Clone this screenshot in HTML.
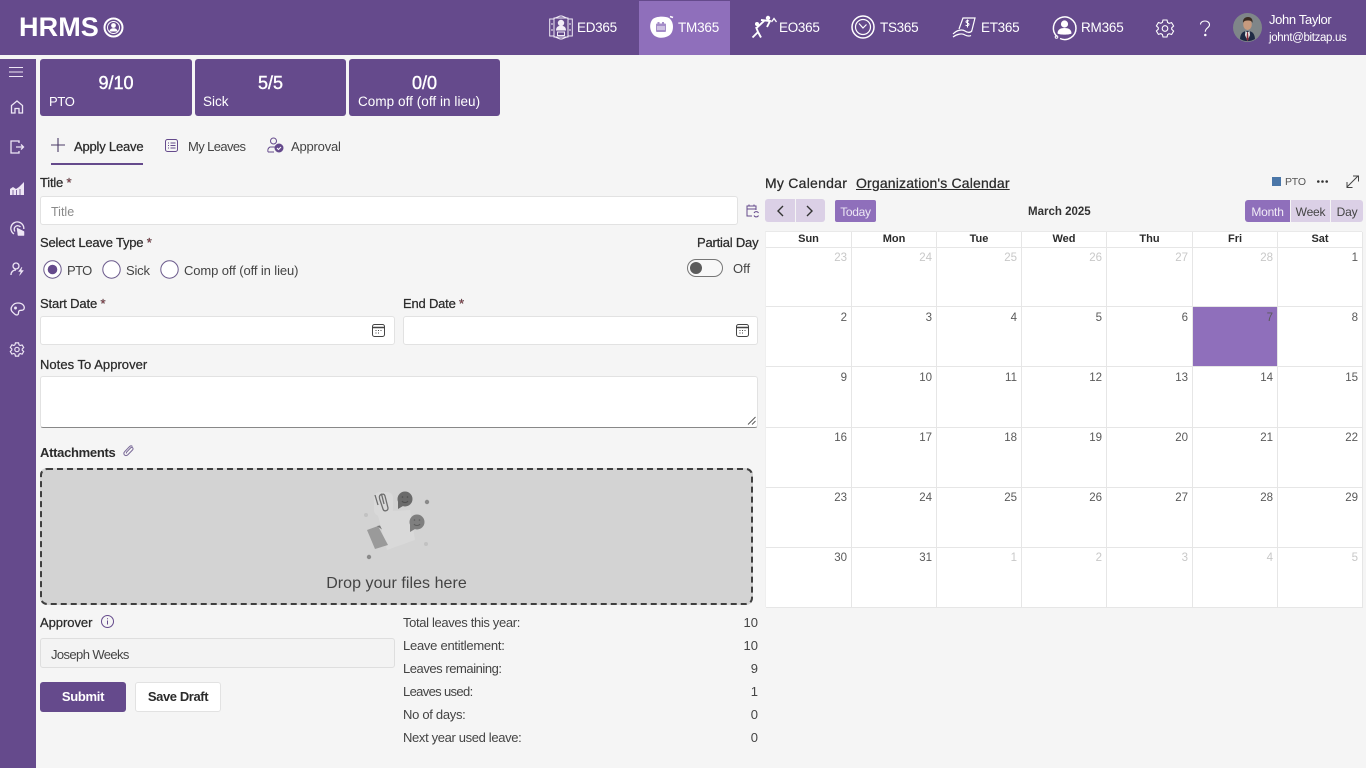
<!DOCTYPE html>
<html lang="en">
<head>
<meta charset="utf-8">
<title>HRMS</title>
<style>
html,body{margin:0;padding:0;width:1366px;height:768px;overflow:hidden;background:#f5f5f5;font-family:"Liberation Sans",sans-serif;color:#333}
*{box-sizing:border-box}
.t{position:absolute;white-space:nowrap;line-height:20px;height:20px;font-size:13px;color:#3a3a3a}
.b{font-weight:400;color:#2b2b2b;-webkit-text-stroke:.25px #2b2b2b}
.w{color:#fff}
.r{color:#a4404f}
.abs{position:absolute}
svg{position:absolute;overflow:visible;fill:none}
.card{position:absolute;top:59px;height:57px;background:#654a8c;border-radius:3px}
.input{position:absolute;background:#fff;border:1px solid #e2e2e2;border-radius:3px}
.cal{position:absolute;left:765px;top:231px;width:597px;height:376px;display:grid;grid-template-columns:86px 85px 85px 85px 86px 85px 85px;grid-template-rows:16px 59px 60px 61px 60px 60px 60px;background:#fff;border-top:1px solid #e9e9e9;border-left:1px solid #efefef}
.cal div{border-right:1px solid #e6e6e6;border-bottom:1px solid #e6e6e6;font-size:11.5px;color:#5a5a5a;text-align:right;padding:3px 4px 0 0;line-height:14px}
.cal .h{text-align:center;font-size:11px;font-weight:700;color:#2b2b2b;padding:0;line-height:15px}
.cal .m{color:#c8c8c8}
.cal .s{background:#8f6fbb}
.cal .p{padding-top:4px}
</style>
</head>
<body>
<!-- top bar -->
<div class="abs" style="left:0;top:0;width:1366px;height:55px;background:#654a8c"></div>
<div class="abs" style="left:639px;top:1px;width:91px;height:54px;background:#8f6fbb"></div>
<div class="t w" style="left:19px;top:12px;height:30px;line-height:30px;font-size:27px;font-weight:700;letter-spacing:.1px">HRMS</div>
<svg style="left:103px;top:17px" width="21" height="21" viewBox="0 0 21 21"><circle cx="10.5" cy="10.5" r="9" stroke="#fff" stroke-width="2"/><circle cx="10.5" cy="10.5" r="6" stroke="#fff" stroke-width="1"/><circle cx="10.5" cy="8.500" r="2.400" fill="#fff"/><path d="M6.300 14.500c.6-2.500 2.200-3.200 4.200-3.200s3.600.7 4.200 3.200z" fill="#fff"/></svg>

<!-- ED365 -->
<svg style="left:549px;top:15px" width="24" height="25" viewBox="0 0 24 25" stroke="#f1ecf6" stroke-width="1"><path d="M5 3.500L11 1h2l6 2.500M5 21.500l6 2.500h2l6-2.500"/><rect x="5" y="3" width="14" height="19"/><rect x=".7" y="4" width="4.300" height="17"/><rect x="19" y="4" width="4.300" height="17"/><circle cx="12" cy="8" r="2.700" fill="#f1ecf6"/><path d="M7.500 15c0-2.800 2-3.800 4.500-3.800s4.500 1 4.500 3.800z" fill="#f1ecf6"/><rect x="8.500" y="17" width="7" height="3.500"/><path d="M3 8v2M3 14v2M21 8v2M21 14v2"/></svg>
<div class="t w" style="left:577px;top:18px;font-size:13.500px;letter-spacing:-.3px">ED365</div>
<!-- TM365 -->
<svg style="left:648px;top:15px" width="27" height="25" viewBox="0 0 27 25"><path d="M4 5C7 1 17 1 21 3c4 3 5 9 3 14-2 5-10 7-15 5C3 20 0 11 4 5z" fill="#fff"/><path d="M22 1.500l3 1" stroke="#fff" stroke-width="1.500"/><rect x="8" y="8.500" width="10" height="8.500" rx="1" fill="#a48cc8"/><rect x="9.500" y="7" width="2" height="3" fill="#a48cc8"/><rect x="14" y="7" width="2" height="3" fill="#a48cc8"/><path d="M10 11v4M12 11v4M14 11v4M16 11v4" stroke="#fff" stroke-width=".9"/></svg>
<div class="t w" style="left:678px;top:18px;font-size:13.500px;letter-spacing:-.2px">TM365</div>
<!-- EO365 -->
<svg style="left:750px;top:15px" width="26" height="25" viewBox="0 0 26 25"><circle cx="7" cy="9" r="2" fill="#fff"/><circle cx="18" cy="3" r="2.200" fill="#fff"/><path d="M6 12l2 5-5.500 5.500M8 17l3 5.500M7 12.500l7-6.500M11 5l9 1-3 6" stroke="#fff" stroke-width="1.900"/><path d="M21.500 7l2.500-3.500L26.500 7" stroke="#fff" stroke-width="1.300"/></svg>
<div class="t w" style="left:779px;top:18px;font-size:13.500px;letter-spacing:-.3px">EO365</div>
<!-- TS365 -->
<svg style="left:851px;top:15px" width="24" height="24" viewBox="0 0 24 24" stroke="#fff"><circle cx="12" cy="12" r="11" stroke-width="1.500"/><circle cx="12" cy="12" r="7.500" stroke-width="1.200"/><path d="M8 8.500l4 4.500 3.500-3.500" stroke-width="1.200"/></svg>
<div class="t w" style="left:880px;top:18px;font-size:13.500px;letter-spacing:-.3px">TS365</div>
<!-- ET365 -->
<svg style="left:952px;top:16px" width="25" height="22" viewBox="0 0 25 22" stroke="#fff" stroke-width="1.200"><path d="M7 13L11 2h12l-3 12c-.5 2-2 2.500-3.500 2.500"/><path d="M1 18c4-4 9-5 12-3 2 1.500 5 2 7 0M1 21c4-3 9-4 12-2 2 1 4 1.500 6 .5"/><path d="M17 5c-2-1-3 0-3 1s3 1 3 2.200-1.800 1.800-3.500 1M15.500 3.500v8" stroke-width="1"/></svg>
<div class="t w" style="left:981px;top:18px;font-size:13.500px;letter-spacing:-.3px">ET365</div>
<!-- RM365 -->
<svg style="left:1052px;top:15px" width="25" height="25" viewBox="0 0 25 25"><path d="M5 21.500A11.300 11.300 0 1 1 8 23.500" stroke="#fff" stroke-width="1.500"/><circle cx="4.500" cy="22" r="1.300" stroke="#fff"/><circle cx="12.500" cy="9" r="3.600" fill="#fff"/><path d="M5.500 18.500c0-4 3-5.500 7-5.500s7 1.500 7 5.500c-2 1.500-12 1.500-14 0z" fill="#fff"/></svg>
<div class="t w" style="left:1081px;top:18px;font-size:13.500px;letter-spacing:-.2px">RM365</div>
<!-- settings -->
<svg style="left:1156px;top:19px" width="18" height="19" viewBox="0 0 18 19" stroke="#fff" stroke-width="1.100"><path d="M7 1h4l.6 2.500 1.500.9 2.500-.8 2 3.400-1.900 1.800v1.500l1.900 1.800-2 3.400-2.500-.8-1.500.9L11 18H7l-.6-2.500-1.500-.9-2.500.8-2-3.400 1.900-1.800V8.700L.4 6.900l2-3.400 2.500.8 1.500-.9z"/><circle cx="9" cy="9.500" r="2.800"/></svg>
<svg style="left:1199px;top:20px" width="12" height="17" viewBox="0 0 12 17" stroke="#fff" stroke-width="1.100"><path d="M1.500 4.500C1.500 2.200 3.500 1 6 1s4.500 1.500 4.500 3.800c0 3-4.200 3.200-4.200 7"/><circle cx="6.300" cy="15" r=".7" fill="#fff"/></svg>
<!-- avatar -->
<svg style="left:1233px;top:13px" width="29" height="29" viewBox="0 0 29 29"><circle cx="14.500" cy="14.500" r="14.500" fill="#7f8689"/><path d="M7 26c.5-6 3-8 7.500-8s7 2 7.500 8a14.500 14.500 0 0 1-15 0z" fill="#1e2a44"/><path d="M12.500 18l2 1.500 2-1.500 .5 4-2.500 6-2.500-6z" fill="#e4e4e4"/><path d="M14 19.500h1l.6 7-1 1.500-1.100-1.500z" fill="#8b2b3a"/><ellipse cx="14.500" cy="11.500" rx="4.300" ry="5.500" fill="#c79a7e"/><path d="M10 10c-.5-4 2-6 5-6s5 2 4.500 6c-.7-2-2-2.500-4.500-2.500S10.700 8 10 10z" fill="#3a2a20"/></svg>
<div class="t w" style="left:1269px;top:10px;font-size:13px;letter-spacing:-.35px">John Taylor</div>
<div class="t w" style="left:1269px;top:28px;font-size:11.500px;letter-spacing:-.35px">johnt@bitzap.us</div>

<!-- side nav -->
<div class="abs" style="left:0;top:59px;width:36px;height:709px;background:#654a8c"></div>
<svg style="left:9px;top:67px" width="14" height="10" viewBox="0 0 14 10" stroke="#eee6f5" stroke-width="1.100"><path d="M0 .5h14M0 5h14M0 9.500h14"/></svg>
<svg style="left:10px;top:100px" width="14" height="14" viewBox="0 0 14 14" stroke="#eee6f5" stroke-width="1.300"><path d="M1.500 13V5.500L7 1l5.500 4.500V13H9V8.500H5V13z"/></svg>
<svg style="left:10px;top:140px" width="15" height="14" viewBox="0 0 15 14" stroke="#eee6f5" stroke-width="1.300"><path d="M9 3V1H1v12h8v-2M6 7h7.500M11 4.500L13.500 7 11 9.500"/></svg>
<svg style="left:10px;top:181px" width="14" height="14" viewBox="0 0 14 14"><path d="M0 14V8l3-2 3 2 3-2 5-5v13z" fill="#eee6f5"/><path d="M3 9v5M6.500 9v5M10 8v6" stroke="#654a8c" stroke-width=".8"/></svg>
<svg style="left:10px;top:221px" width="15" height="15" viewBox="0 0 15 15" stroke="#eee6f5" stroke-width="1.300"><path d="M4 13A6.500 6.500 0 1 1 13.800 8"/><path d="M5 10.500A3.500 3.500 0 1 1 10.500 6"/><path d="M7 7l7 3.500v4h-6z" fill="#eee6f5" stroke-width=".5"/></svg>
<svg style="left:10px;top:262px" width="15" height="14" viewBox="0 0 15 14" stroke="#eee6f5" stroke-width="1.300"><circle cx="6" cy="4" r="3"/><path d="M1 13c0-3 2-5 5-5"/><path d="M12 5L8.500 9.500h2.500L9.500 13.500l4-5H11z" fill="#eee6f5" stroke-width=".5"/></svg>
<svg style="left:10px;top:302px" width="15" height="14" viewBox="0 0 15 14" stroke="#eee6f5" stroke-width="1.300"><path d="M2 9.500C-.5 6 3 1 8 1s7 3.500 6 6c-1 2-3 1-4.500 1.500S9 11.500 8 12.500c-2 1.500-4-1-6-3z"/><circle cx="5.500" cy="6" r=".8" fill="#eee6f5"/></svg>
<svg style="left:10px;top:342px" width="14" height="15" viewBox="0 0 18 19" stroke="#eee6f5" stroke-width="1.500"><path d="M7 1h4l.6 2.500 1.500.9 2.500-.8 2 3.400-1.900 1.800v1.500l1.900 1.800-2 3.400-2.500-.8-1.500.9L11 18H7l-.6-2.500-1.500-.9-2.500.8-2-3.400 1.900-1.800V8.700L.4 6.900l2-3.400 2.500.8 1.500-.9z"/><circle cx="9" cy="9.500" r="2.800"/></svg>

<!-- summary cards -->
<div class="card" style="left:40px;width:152px"></div>
<div class="card" style="left:195px;width:151px"></div>
<div class="card" style="left:349px;width:151px"></div>
<div class="t w" style="left:40px;width:152px;text-align:center;top:73px;font-size:18px;-webkit-text-stroke:.4px #fff">9/10</div>
<div class="t w" style="left:195px;width:151px;text-align:center;top:73px;font-size:18px;-webkit-text-stroke:.4px #fff">5/5</div>
<div class="t w" style="left:349px;width:151px;text-align:center;top:73px;font-size:18px;-webkit-text-stroke:.4px #fff">0/0</div>
<div class="t w" style="left:49px;top:92px;font-size:13px;letter-spacing:-.3px">PTO</div>
<div class="t w" style="left:203px;top:92px;font-size:13.500px">Sick</div>
<div class="t w" style="left:358px;top:92px;font-size:13.500px;letter-spacing:.05px">Comp off (off in lieu)</div>

<!-- tabs -->
<svg style="left:51px;top:138px" width="14" height="14" viewBox="0 0 14 14" stroke="#4a3a66" stroke-width="1.100"><path d="M7 0v14M0 7h14"/></svg>
<div class="t b" style="left:74px;top:137px;font-size:13px;letter-spacing:-.2px">Apply Leave</div>
<div class="abs" style="left:51px;top:163px;width:92px;height:2px;background:#654a8c"></div>
<svg style="left:165px;top:139px" width="13" height="13" viewBox="0 0 13 13" stroke="#654a8c" stroke-width="1"><rect x=".5" y=".5" width="12" height="12" rx="2"/><path d="M3 4h1M5.500 4h5M3 6.500h1M5.500 6.500h5M3 9h1M5.500 9h5"/></svg>
<div class="t" style="left:188px;top:137px;font-size:13px;letter-spacing:-.6px;color:#444">My Leaves</div>
<svg style="left:267px;top:137px" width="17" height="16" viewBox="0 0 17 16" stroke="#654a8c" stroke-width="1"><circle cx="6.500" cy="4" r="3"/><path d="M1 15c-.5-2 0-4 2-5h5"/><path d="M1 15h6"/><circle cx="12" cy="11" r="4" fill="#654a8c"/><path d="M10 11l1.500 1.500 2.500-2.500" stroke="#fff"/></svg>
<div class="t" style="left:291px;top:137px;font-size:13px;letter-spacing:-.2px;color:#444">Approval</div>

<!-- Title -->
<div class="t b" style="left:40px;top:173px;font-size:13px;letter-spacing:-.2px">Title <span class="r">*</span></div>
<div class="input" style="left:40px;top:196px;width:698px;height:29px"></div>
<div class="t" style="left:51px;top:202px;font-size:12.500px;color:#8a8a8a">Title</div>
<svg style="left:746px;top:204px" width="13" height="14" viewBox="0 0 13 14" stroke="#654a8c" stroke-width="1"><path d="M6 12H1V2h9v4M1 5h9M3 .5v2M8 .5v2"/><path d="M12.500 9a2.500 2.500 0 0 0-4.500 0M8 11.500a2.500 2.500 0 0 0 4.500 0"/></svg>

<!-- Leave type -->
<div class="t b" style="left:40px;top:233px;font-size:13px;letter-spacing:-.2px">Select Leave Type <span class="r">*</span></div>
<svg style="left:43px;top:260px" width="19" height="19" viewBox="0 0 19 19"><circle cx="9.500" cy="9.500" r="8.700" stroke="#6b5a8c" fill="#fff" stroke-width="1"/><circle cx="9.500" cy="9.500" r="4.800" fill="#654a8c"/></svg>
<div class="t" style="left:67px;top:261px;font-size:13px;letter-spacing:-.6px;color:#444">PTO</div>
<svg style="left:102px;top:260px" width="19" height="19" viewBox="0 0 19 19"><circle cx="9.500" cy="9.500" r="8.700" stroke="#6b5a8c" fill="#fff" stroke-width="1"/></svg>
<div class="t" style="left:126px;top:261px;font-size:13px;letter-spacing:-.2px;color:#444">Sick</div>
<svg style="left:160px;top:260px" width="19" height="19" viewBox="0 0 19 19"><circle cx="9.500" cy="9.500" r="8.700" stroke="#6b5a8c" fill="#fff" stroke-width="1"/></svg>
<div class="t" style="left:184px;top:261px;font-size:13px;letter-spacing:-.1px;color:#444">Comp off (off in lieu)</div>

<!-- Partial day -->
<div class="t b" style="left:697px;top:233px;font-size:13px;letter-spacing:-.2px">Partial Day</div>
<div class="abs" style="left:687px;top:259px;width:36px;height:18px;border:1px solid #777;border-radius:9px;background:#f8f8f8"></div>
<div class="abs" style="left:690px;top:262px;width:12px;height:12px;border-radius:50%;background:#5c5c5c"></div>
<div class="t" style="left:733px;top:259px;font-size:13px;color:#444">Off</div>

<!-- Dates -->
<div class="t b" style="left:40px;top:294px;font-size:13px;letter-spacing:-.15px">Start Date <span class="r">*</span></div>
<div class="input" style="left:40px;top:316px;width:355px;height:29px"></div>
<svg style="left:372px;top:324px" width="13" height="13" viewBox="0 0 13 13" stroke="#444" stroke-width="1"><rect x=".5" y=".5" width="12" height="12" rx="2"/><path d="M1 3.500h11" stroke-width="1.500"/><path d="M3.500 6.500h1M6 6.500h1M8.500 6.500h1M3.500 9h1M6 9h1"/></svg>
<div class="t b" style="left:403px;top:294px;font-size:13px;letter-spacing:-.2px">End Date <span class="r">*</span></div>
<div class="input" style="left:403px;top:316px;width:355px;height:29px"></div>
<svg style="left:736px;top:324px" width="13" height="13" viewBox="0 0 13 13" stroke="#444" stroke-width="1"><rect x=".5" y=".5" width="12" height="12" rx="2"/><path d="M1 3.500h11" stroke-width="1.500"/><path d="M3.500 6.500h1M6 6.500h1M8.500 6.500h1M3.500 9h1M6 9h1"/></svg>

<!-- Notes -->
<div class="t b" style="left:40px;top:355px;font-size:13px;letter-spacing:.03px">Notes To Approver</div>
<div class="input" style="left:40px;top:376px;width:718px;height:52px;border-bottom:1px solid #888"></div>
<svg style="left:747px;top:416px" width="9" height="9" viewBox="0 0 9 9" stroke="#555" stroke-width=".9"><path d="M1 8.500L8.500 1M5 8.500L8.500 5"/></svg>

<!-- Attachments -->
<div class="t" style="left:40px;top:443px;font-size:13px;font-weight:700;letter-spacing:-.3px;color:#2b2b2b">Attachments</div>
<svg style="left:123px;top:445px" width="12" height="12" viewBox="0 0 12 12" stroke="#7a6a98" stroke-width="1"><path d="M9.500 1.500c-1-1-2.200-.7-3 .1L1.800 6.500c-1.500 1.600-1 3 0 3.700s2.200.4 3.200-.6L9.500 5c.8-.9.700-1.800.1-2.300s-1.400-.4-2 .2L3.700 7c-.5.600-.4 1 0 1.300"/></svg>
<div class="abs" style="left:40px;top:468px;width:713px;height:137px;background:#d3d3d3;border:2px dashed #3f3f3f;border-radius:7px"></div>
<svg style="left:360px;top:488px" width="72" height="72" viewBox="0 0 72 72">
<path d="M17 24l33-2 5 30-28 10z" fill="#d9d9d9"/>
<rect x="14" y="4" width="19" height="24" rx="6" fill="#d9d9d9"/>
<path d="M15 7l3 10M22 6c-3 1-3 3-2 6l3 9c1 3 5 2 5-1l-3-12c-1-3-4-2-3 0l2 8" stroke="#6e6e6e" stroke-width="1.300"/>
<circle cx="45" cy="11" r="7.500" fill="#6b6b6b"/><path d="M38 13v8l5-3z" fill="#6b6b6b"/>
<path d="M42 13c1 2 5 2 6 0" stroke="#4f4f4f" stroke-width="1"/><circle cx="42.500" cy="9" r=".8" fill="#4f4f4f"/><circle cx="47.500" cy="9" r=".8" fill="#4f4f4f"/>
<circle cx="57" cy="34" r="7.500" fill="#7f7f7f"/><path d="M50 36v8l5-3z" fill="#7f7f7f"/>
<path d="M54 36c1 2 5 2 6 0" stroke="#5e5e5e" stroke-width="1"/><circle cx="54.500" cy="32" r=".8" fill="#5e5e5e"/><circle cx="59.500" cy="32" r=".8" fill="#5e5e5e"/>
<path d="M7 42l11-4 10 19-13 4z" fill="#9a9a9a"/>
<path d="M17 38l3-.5 2 4z" fill="#777"/>
<circle cx="67" cy="14" r="2.200" fill="#8a8a8a"/><circle cx="6" cy="27" r="2" fill="#c2c2c2"/><circle cx="66" cy="56" r="2" fill="#c2c2c2"/><circle cx="9" cy="69" r="2.200" fill="#8a8a8a"/>
</svg>
<div class="t" style="left:40px;width:713px;text-align:center;top:574px;font-size:16px;letter-spacing:.05px;color:#444">Drop your files here</div>

<!-- Approver -->
<div class="t b" style="left:40px;top:613px;font-size:13px;letter-spacing:-.05px">Approver</div>
<svg style="left:101px;top:615px" width="13" height="13" viewBox="0 0 13 13" stroke="#654a8c" stroke-width="1"><circle cx="6.500" cy="6.500" r="6"/><path d="M6.500 5.500v4M6.500 3.200v1"/></svg>
<div class="abs" style="left:40px;top:638px;width:355px;height:30px;background:#f3f3f3;border:1px solid #dedede;border-radius:3px"></div>
<div class="t" style="left:51px;top:645px;font-size:13px;letter-spacing:-.6px;color:#444">Joseph Weeks</div>
<div class="abs" style="left:40px;top:682px;width:86px;height:30px;background:#654a8c;border-radius:3px"></div>
<div class="t w" style="left:40px;width:86px;text-align:center;top:687px;font-size:13px;font-weight:700;letter-spacing:-.3px">Submit</div>
<div class="abs" style="left:135px;top:682px;width:86px;height:30px;background:#fff;border:1px solid #e2e2e2;border-radius:3px"></div>
<div class="t" style="left:135px;width:86px;text-align:center;top:687px;font-size:13px;font-weight:700;letter-spacing:-.4px;color:#2b2b2b">Save Draft</div>

<!-- Stats -->
<div class="t" style="left:403px;top:613px;font-size:13px;letter-spacing:-.35px;color:#444">Total leaves this year:</div>
<div class="t" style="left:403px;top:636px;font-size:13px;letter-spacing:-.26px;color:#444">Leave entitlement:</div>
<div class="t" style="left:403px;top:659px;font-size:13px;letter-spacing:-.45px;color:#444">Leaves remaining:</div>
<div class="t" style="left:403px;top:682px;font-size:13px;letter-spacing:-.65px;color:#444">Leaves used:</div>
<div class="t" style="left:403px;top:705px;font-size:13px;letter-spacing:-.3px;color:#444">No of days:</div>
<div class="t" style="left:403px;top:728px;font-size:13px;letter-spacing:-.35px;color:#444">Next year used leave:</div>
<div class="t" style="left:708px;width:50px;text-align:right;top:613px;font-size:13px;color:#444">10</div>
<div class="t" style="left:708px;width:50px;text-align:right;top:636px;font-size:13px;color:#444">10</div>
<div class="t" style="left:708px;width:50px;text-align:right;top:659px;font-size:13px;color:#444">9</div>
<div class="t" style="left:708px;width:50px;text-align:right;top:682px;font-size:13px;color:#444">1</div>
<div class="t" style="left:708px;width:50px;text-align:right;top:705px;font-size:13px;color:#444">0</div>
<div class="t" style="left:708px;width:50px;text-align:right;top:728px;font-size:13px;color:#444">0</div>

<!-- Calendar header -->
<div class="t b" style="left:765px;top:173px;font-size:14px;letter-spacing:.25px">My Calendar</div>
<div class="t b" style="left:856px;top:173px;font-size:14px;letter-spacing:.17px;text-decoration:underline">Organization's Calendar</div>
<div class="abs" style="left:1272px;top:177px;width:9px;height:9px;background:#4a76a8"></div>
<div class="t" style="left:1285px;top:172px;font-size:10.500px;letter-spacing:-.2px;color:#555">PTO</div>
<svg style="left:1317px;top:180px" width="11" height="3" viewBox="0 0 11 3"><circle cx="1.300" cy="1.500" r="1.300" fill="#333"/><circle cx="5.500" cy="1.500" r="1.300" fill="#333"/><circle cx="9.700" cy="1.500" r="1.300" fill="#333"/></svg>
<svg style="left:1346px;top:175px" width="13" height="13" viewBox="0 0 13 13" stroke="#444" stroke-width="1"><path d="M1 12L12 1M7 1h5.500v5.500M1 7v5.500h5.500"/></svg>

<div class="abs" style="left:765px;top:199px;width:30px;height:23px;background:#dbd0e6;border-radius:3px 0 0 3px"></div>
<div class="abs" style="left:796px;top:199px;width:29px;height:23px;background:#dbd0e6;border-radius:0 3px 3px 0"></div>
<svg style="left:776px;top:205px" width="8" height="12" viewBox="0 0 8 12" stroke="#333" stroke-width="1.400"><path d="M7 1L2 6l5 5"/></svg>
<svg style="left:806px;top:205px" width="8" height="12" viewBox="0 0 8 12" stroke="#333" stroke-width="1.400"><path d="M1 1l5 5-5 5"/></svg>
<div class="abs" style="left:835px;top:200px;width:41px;height:22px;background:#8f6fbb;border-radius:2px"></div>
<div class="t" style="left:835px;width:41px;text-align:center;top:202px;font-size:12px;color:#ece6f4;letter-spacing:-.3px">Today</div>
<div class="t" style="left:1028px;top:202px;font-size:11.500px;font-weight:700;color:#333">March 2025</div>
<div class="abs" style="left:1245px;top:200px;width:45px;height:22px;background:#8f6fbb;border-radius:3px 0 0 3px"></div>
<div class="abs" style="left:1291px;top:200px;width:39px;height:22px;background:#dbd0e6"></div>
<div class="abs" style="left:1331px;top:200px;width:32px;height:22px;background:#dbd0e6;border-radius:0 3px 3px 0"></div>
<div class="t" style="left:1245px;width:45px;text-align:center;top:202px;font-size:12px;color:#f1ecf6;letter-spacing:-.2px">Month</div>
<div class="t" style="left:1291px;width:39px;text-align:center;top:202px;font-size:12px;color:#444;letter-spacing:-.2px">Week</div>
<div class="t" style="left:1331px;width:32px;text-align:center;top:202px;font-size:12px;color:#444;letter-spacing:-.2px">Day</div>

<!-- Calendar grid -->
<div class="cal">
<div class="h">Sun</div><div class="h">Mon</div><div class="h">Tue</div><div class="h">Wed</div><div class="h">Thu</div><div class="h">Fri</div><div class="h">Sat</div>
<div class="m">23</div><div class="m">24</div><div class="m">25</div><div class="m">26</div><div class="m">27</div><div class="m">28</div><div>1</div>
<div class="p">2</div><div class="p">3</div><div class="p">4</div><div class="p">5</div><div class="p">6</div><div class="s p">7</div><div class="p">8</div>
<div class="p">9</div><div class="p">10</div><div class="p">11</div><div class="p">12</div><div class="p">13</div><div class="p">14</div><div class="p">15</div>
<div>16</div><div>17</div><div>18</div><div>19</div><div>20</div><div>21</div><div>22</div>
<div>23</div><div>24</div><div>25</div><div>26</div><div>27</div><div>28</div><div>29</div>
<div>30</div><div>31</div><div class="m">1</div><div class="m">2</div><div class="m">3</div><div class="m">4</div><div class="m">5</div>
</div>
</body>
</html>
